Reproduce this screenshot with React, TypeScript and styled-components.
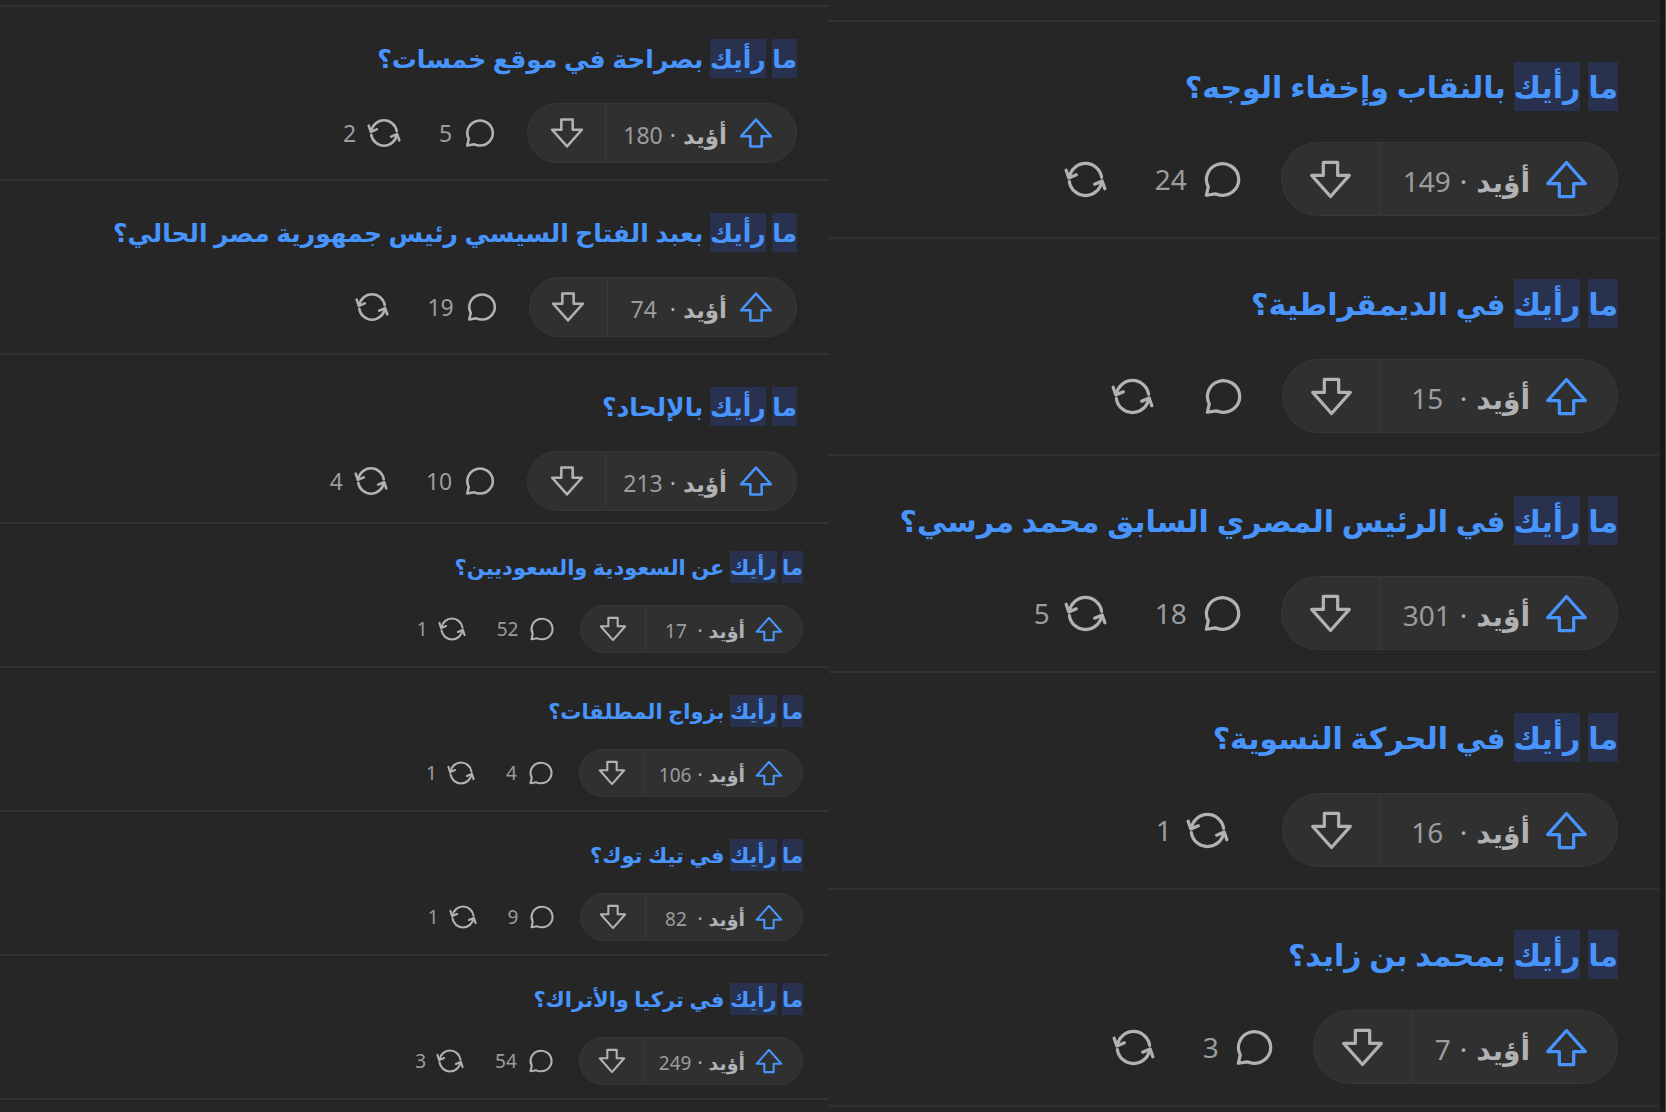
import React from "react";
import styled, { createGlobalStyle, css, ThemeProvider } from "styled-components";

const scales = {
  medium: {
    title: 25, titleLine: 39, text: 23, gutter: 32, padTop: 33, padBottom: 17, padLast: 11, gap: 25,
    pill: 60, icon: 34, voteGap: 12, votePad: 24, voteEnd: 20, down: 78, num: 38, dot: 7,
    statGap: 11, first: 30, between: 38, alone: 12,
  },
  small: {
    title: 21, titleLine: 32, text: 19, gutter: 26, padTop: 28, padBottom: 14, padLast: 13, gap: 22,
    pill: 48, icon: 28, voteGap: 10, votePad: 20, voteEnd: 17, down: 65, num: 31, dot: 6,
    statGap: 10, first: 24, between: 31, alone: 10,
  },
  large: {
    title: 30, titleLine: 49, text: 28, gutter: 40, padTop: 41, padBottom: 22, padLast: 21, gap: 31,
    pill: 74, icon: 43, voteGap: 15, votePad: 30, voteEnd: 26, down: 98, num: 47, dot: 9,
    statGap: 14, first: 37, between: 48, alone: 16,
  },
};

const GlobalStyle = createGlobalStyle`
  *, *::before, *::after { box-sizing: border-box; }
  body {
    margin: 0;
    background: #262626;
    font-family: "Noto Sans", "DejaVu Sans", sans-serif;
  }
`;

const Page = styled.main`
  display: flex;
  direction: ltr;
  min-height: 100vh;
  overflow: hidden;
`;

const Column = styled.div`
  flex: 1 1 0;
  min-width: 0;
  padding-top: ${(p) => p.$top}px;
`;

const Edge = styled.div`
  flex: none;
  width: 8px;
  background: #191919;
  border-left: 2px solid #262626;
  border-right: 1px solid #4a4a4a;
`;

const Question = styled.article`
  border-top: 2px solid #323232;
  padding: ${({ theme }) => `${theme.padTop - 1}px ${theme.gutter}px ${theme.padBottom - 1}px`};
`;

const Feed = styled.section`
  direction: rtl;

  ${Question}:last-child {
    padding-bottom: ${({ theme }) => theme.padLast}px;
  }

  &:last-child {
    border-bottom: 2px solid #323232;
  }
`;

const Title = styled.h2`
  margin: 0 0 ${({ theme }) => theme.gap}px;
  font-size: ${({ theme }) => theme.title}px;
  line-height: ${({ theme }) => theme.titleLine}px;
  font-weight: 700;
  white-space: nowrap;
`;

const TitleLink = styled.a`
  color: #4894fd;
  text-decoration: none;
`;

const Hit = styled.mark`
  display: inline-block;
  color: inherit;
  background: #28324f;
`;

const Actions = styled.div`
  display: flex;
  align-items: center;
`;

const Pill = styled.div`
  display: flex;
  height: ${({ theme }) => theme.pill}px;
  border: 1px solid #373737;
  border-radius: 999px;
  background: #303030;
  overflow: hidden;
  margin-left: ${({ theme }) => theme.first}px;
`;

const buttonReset = css`
  display: flex;
  align-items: center;
  margin: 0;
  padding: 0;
  border: 0;
  background: none;
  font: inherit;
  font-size: ${({ theme }) => theme.text}px;
  color: #b1b2b4;
  white-space: nowrap;
`;

const Upvote = styled.button`
  ${buttonReset}
  padding: 0 ${({ theme }) => theme.votePad - 1}px 0 ${({ theme }) => theme.voteEnd - 3}px;
`;

const VoteText = styled.span`
  display: flex;
  align-items: baseline;
  padding-top: 3px;
  margin-right: ${({ theme }) => theme.voteGap}px;
`;

const VoteLabel = styled.span`
  font-weight: 600;
`;

const Dot = styled.span`
  margin: 0 ${({ theme }) => theme.dot}px;
`;

const Count = styled.span`
  color: #9b9c9e;
  text-align: center;
  min-width: ${({ theme, $wide }) => ($wide ? `${theme.num}px` : "0")};
`;

const Downvote = styled.button`
  ${buttonReset}
  justify-content: center;
  width: ${({ theme }) => theme.down}px;
  border-right: 1px solid #393939;
`;

const Stat = styled.button`
  ${buttonReset}
  gap: ${({ theme }) => theme.statGap}px;
  margin-left: ${({ theme }) => theme.between}px;
  margin-right: ${({ theme, $alone }) => ($alone ? theme.alone : 0)}px;
`;

const Icon = styled.svg`
  display: block;
  flex: none;
  width: ${({ theme }) => theme.icon}px;
  height: ${({ theme }) => theme.icon}px;
  fill: none;
  stroke: ${(p) => p.$color || "#b1b2b4"};
  stroke-width: 1.8;
  stroke-linejoin: round;
  stroke-linecap: round;
`;

const UpIcon = () => (
  <Icon viewBox="0 0 24 24" $color="#4894fd" aria-hidden="true">
    <path d="M12 2.5 1.5 14.3H8V21.5h8V14.3h6.5z" />
  </Icon>
);
const DownIcon = () => (
  <Icon viewBox="0 0 24 24" aria-hidden="true">
    <path d="M12 21.5 22.5 9.7H16V2.5H8v7.2H1.5z" />
  </Icon>
);
const CommentIcon = () => (
  <Icon viewBox="0 0 24 24" aria-hidden="true">
    <path d="M12.07 20.8a9 8.8 0 1 0-8-4.7L3 20.8l5-.8a9 9 0 0 0 4.07.8z" />
  </Icon>
);
const ShareIcon = () => (
  <Icon viewBox="0 0 24 24" aria-hidden="true">
    <path d="M3 10.8A9.1 9.1 0 0 1 21 10.8M3 13.2A9.1 9.1 0 0 0 21 13.2" />
    <path d="M1.2 6.8 2.7 11.2 6.9 9.4M17.1 14.6 21.3 12.8 22.8 17.2" />
  </Icon>
);

const Post = ({ text, votes, comments, shares }) => (
  <Question>
    <Title>
      <TitleLink href="#">
        <Hit>ما</Hit> <Hit>رأيك</Hit> {text}
      </TitleLink>
    </Title>
    <Actions>
      <Pill>
        <Upvote type="button">
          <UpIcon />
          <VoteText>
            <VoteLabel>أؤيد</VoteLabel>
            <Dot>·</Dot>
            <Count $wide={votes > 9 && votes < 100}>{votes}</Count>
          </VoteText>
        </Upvote>
        <Downvote type="button" aria-label="لا أؤيد">
          <DownIcon />
        </Downvote>
      </Pill>
      {comments !== null && (
        <Stat type="button" aria-label="تعليق">
          <CommentIcon />
          {comments > 0 && <Count>{comments}</Count>}
        </Stat>
      )}
      <Stat type="button" aria-label="مشاركة" $alone={comments === null}>
        <ShareIcon />
        {shares > 0 && <Count>{shares}</Count>}
      </Stat>
    </Actions>
  </Question>
);

const mediumPosts = [
  { text: "بصراحة في موقع خمسات؟", votes: 180, comments: 5, shares: 2 },
  { text: "بعبد الفتاح السيسي رئيس جمهورية مصر الحالي؟", votes: 74, comments: 19, shares: 0 },
  { text: "بالإلحاد؟", votes: 213, comments: 10, shares: 4 },
];
const smallPosts = [
  { text: "عن السعودية والسعوديين؟", votes: 17, comments: 52, shares: 1 },
  { text: "بزواج المطلقات؟", votes: 106, comments: 4, shares: 1 },
  { text: "في تيك توك؟", votes: 82, comments: 9, shares: 1 },
  { text: "في تركيا والأتراك؟", votes: 249, comments: 54, shares: 3 },
];
const largePosts = [
  { text: "بالنقاب وإخفاء الوجه؟", votes: 149, comments: 24, shares: 0 },
  { text: "في الديمقراطية؟", votes: 15, comments: 0, shares: 0 },
  { text: "في الرئيس المصري السابق محمد مرسي؟", votes: 301, comments: 18, shares: 5 },
  { text: "في الحركة النسوية؟", votes: 16, comments: null, shares: 1 },
  { text: "بمحمد بن زايد؟", votes: 7, comments: 3, shares: 0 },
];

const PostFeed = ({ scale, posts }) => (
  <ThemeProvider theme={scales[scale]}>
    <Feed>
      {posts.map((post) => (
        <Post key={post.text} {...post} />
      ))}
    </Feed>
  </ThemeProvider>
);

export default function App() {
  return (
    <>
      <GlobalStyle />
      <Page lang="ar">
        <Column $top={5}>
          <PostFeed scale="medium" posts={mediumPosts} />
          <PostFeed scale="small" posts={smallPosts} />
        </Column>
        <Column $top={20}>
          <PostFeed scale="large" posts={largePosts} />
        </Column>
        <Edge />
      </Page>
    </>
  );
}
